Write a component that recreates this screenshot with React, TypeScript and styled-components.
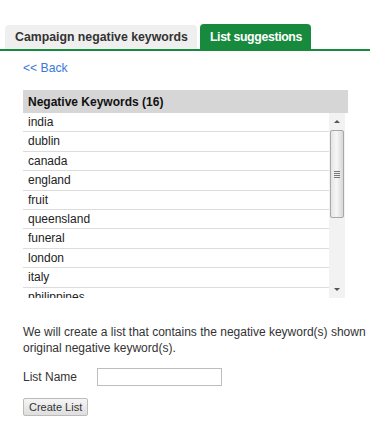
import styled, { createGlobalStyle } from 'styled-components'

const GlobalStyle = createGlobalStyle`
  html, body {
    margin: 0;
    padding: 0;
    background: #fff;
    overflow: hidden;
  }
  body {
    font-family: "Liberation Sans", Arial, sans-serif;
    font-size: 12px;
    color: #222;
  }
`

const Page = styled.div`
  width: 378px;
  height: 431px;
  padding-top: 24px;
  box-sizing: border-box;
  overflow: hidden;
`

const TabBar = styled.div`
  display: flex;
  gap: 3px;
  width: 370px;
  padding-left: 5px;
  box-sizing: border-box;
  border-bottom: 2px solid #178a3e;
  height: 27px;
  align-items: flex-end;
`

const Tab = styled.div<{ $active?: boolean }>`
  box-sizing: border-box;
  padding: 0 9px 0 10px;
  display: flex;
  align-items: center;
  font-weight: bold;
  font-size: 12.3px;
  letter-spacing: ${p => (p.$active ? '-0.35px' : '0')};
  border-radius: 4px 4px 0 0;
  background: ${p => (p.$active ? '#178a3e' : '#efefef')};
  color: ${p => (p.$active ? '#fff' : '#333')};
  height: ${p => (p.$active ? '25px' : '24px')};
`

const Content = styled.div`
  padding-left: 23px;
`

const BackLink = styled.a`
  display: block;
  margin-top: 9px;
  line-height: 16px;
  font-size: 12.2px;
  color: #3a77d8;
  text-decoration: none;
  cursor: pointer;
`

const ListPanel = styled.div`
  margin-top: 14px;
  width: 325px;
`

const ListHeader = styled.div`
  height: 23px;
  background: #d6d6d6;
  font-weight: bold;
  color: #111;
  padding-left: 5px;
  display: flex;
  align-items: center;
`

const ListBody = styled.div`
  display: flex;
  height: 185px;
`

const Rows = styled.div`
  width: 306px;
  overflow: hidden;
`

const Row = styled.div`
  height: 19.4px;
  box-sizing: border-box;
  border-bottom: 1px solid #dcdcdc;
  padding-left: 5px;
  line-height: 18px;
  color: #222;
`

const ScrollTrack = styled.div`
  width: 16px;
  background: #f2f2f2;
  display: flex;
  flex-direction: column;
  align-items: center;
`

const Arrow = styled.div<{ $down?: boolean }>`
  height: 17px;
  display: flex;
  align-items: center;
  justify-content: center;
  width: 100%;
  &::before {
    content: '';
    border-left: 3px solid transparent;
    border-right: 3px solid transparent;
    ${p => (p.$down ? 'border-top: 3px solid #555;' : 'border-bottom: 3px solid #555;')}
  }
`

const Thumb = styled.div`
  width: 14px;
  height: 88px;
  box-sizing: border-box;
  border: 1px solid #a8a8a8;
  border-radius: 2px;
  background: linear-gradient(to right, #e4e4e4, #f6f6f6 45%, #d8d8d8);
  display: flex;
  flex-direction: column;
  align-items: center;
  justify-content: center;
  gap: 1px;
`

const Grip = styled.div`
  width: 6px;
  height: 1px;
  background: #777;
`

const Spacer = styled.div`
  flex: 1;
`

const Note = styled.p`
  margin: 26px 0 0;
  line-height: 16px;
  color: #333;
  white-space: nowrap;
`

const FieldRow = styled.div`
  display: flex;
  align-items: center;
  margin-top: 12px;
  height: 18px;
`

const Label = styled.label`
  width: 74px;
  color: #333;
`

const TextInput = styled.input`
  width: 125px;
  height: 18px;
  box-sizing: border-box;
  border: 1px solid #bdbdbd;
  padding: 0 3px;
  font: inherit;
`

const Button = styled.button`
  margin-top: 12px;
  height: 18px;
  padding: 0 5px;
  font-family: "Liberation Sans", Arial, sans-serif;
  font-size: 11px;
  color: #333;
  border: 1px solid #bbb;
  border-radius: 2px;
  background: linear-gradient(#f5f5f5, #dedede);
  display: block;
`

const keywords = [
  'india',
  'dublin',
  'canada',
  'england',
  'fruit',
  'queensland',
  'funeral',
  'london',
  'italy',
  'philippines',
]

const App = () => {
  return (
    <Page>
      <GlobalStyle />
      <TabBar>
        <Tab>Campaign negative keywords</Tab>
        <Tab $active>List suggestions</Tab>
      </TabBar>
      <Content>
        <BackLink>&lt;&lt; Back</BackLink>
        <ListPanel>
          <ListHeader>Negative Keywords (16)</ListHeader>
          <ListBody>
            <Rows>
              {keywords.map(k => (
                <Row key={k}>{k}</Row>
              ))}
            </Rows>
            <ScrollTrack>
              <Arrow />
              <Thumb>
                <Grip />
                <Grip />
                <Grip />
                <Grip />
              </Thumb>
              <Spacer />
              <Arrow $down />
            </ScrollTrack>
          </ListBody>
        </ListPanel>
        <Note>
          We will create a list that contains the negative keyword(s) shown
          <br />
          original negative keyword(s).
        </Note>
        <FieldRow>
          <Label>List Name</Label>
          <TextInput type="text" />
        </FieldRow>
        <Button>Create List</Button>
      </Content>
    </Page>
  )
}

export default App
